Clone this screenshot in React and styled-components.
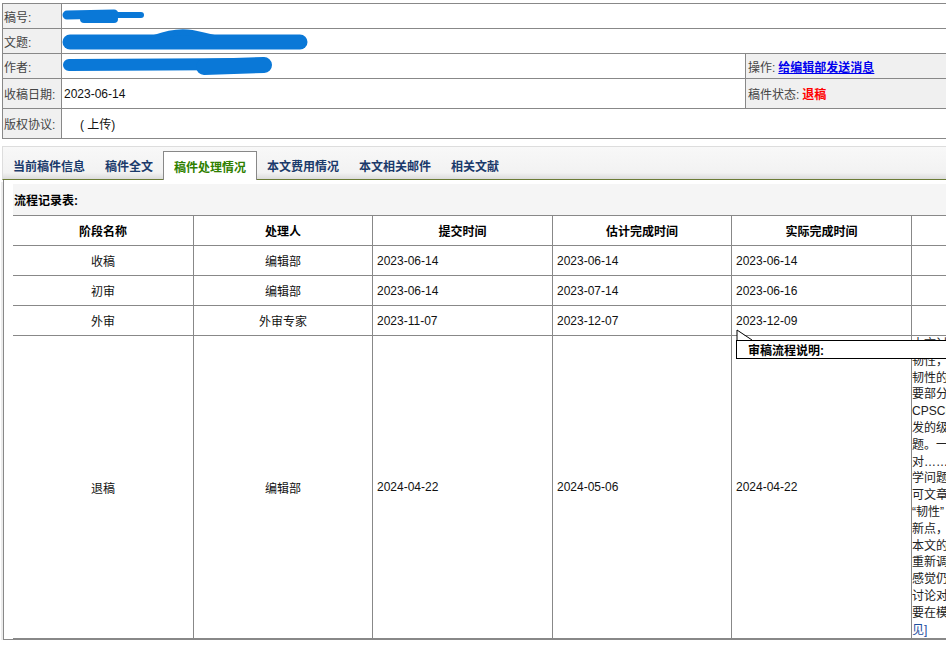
import React from 'react';
import styled, { createGlobalStyle } from 'styled-components';

const GlobalStyle = createGlobalStyle`
  html, body {
    margin: 0;
    padding: 0;
    overflow: hidden;
    background: #fff;
  }
  body {
    font-family: "Liberation Sans", "Noto Sans CJK SC", sans-serif;
    font-size: 12px;
    color: #000;
  }
`;

const Page = styled.div`
  width: 1000px;
  padding: 3px 0 0 2px;
`;

/* 稿件信息表 */
const InfoBox = styled.div`
  border-top: 1px solid #888;
  border-left: 1px solid #888;
`;

const InfoRow = styled.div`
  display: flex;
  height: ${p => p.$h}px;
  border-bottom: 1px solid #888;
`;

const Label = styled.div`
  box-sizing: border-box;
  width: 59px;
  flex: none;
  display: flex;
  align-items: center;
  padding-left: 1px;
  background: #f0f0f0;
  color: #444;
  border-right: 1px solid #888;
  white-space: nowrap;
`;

const Value = styled.div`
  box-sizing: border-box;
  width: ${p => (p.$wide ? 'auto' : '684px')};
  flex: ${p => (p.$wide ? '1' : 'none')};
  display: flex;
  align-items: center;
  padding-left: ${p => p.$indent || 2}px;
  border-right: 1px solid #888;
  color: #111;
  white-space: nowrap;
`;

const Side = styled.div`
  flex: 1;
  display: flex;
  align-items: center;
  padding-left: 2px;
  background: #f0f0f0;
  color: #444;
  white-space: nowrap;
`;

const Link = styled.a`
  color: #0000ee;
  text-decoration: underline;
  font-weight: bold;
  margin-left: 3px;
  cursor: pointer;
`;

const Status = styled.span`
  color: #ff0000;
  font-weight: bold;
  margin-left: 3px;
`;

const Redact = styled.svg`
  display: block;
  overflow: visible;
`;

/* 标签页 */
const TabBar = styled.div`
  margin-top: 7px;
  height: 32px;
  display: flex;
  align-items: flex-end;
  border-top: 1px solid #ddd;
  border-left: 1px solid #ddd;
  border-bottom: 1px solid #6b7b35;
  background: linear-gradient(#f8f8f8, #f2f2f2 80%, #dcdcdc);
`;

const Tab = styled.div`
  box-sizing: border-box;
  padding: 0 ${p => (p.$active ? 10 : 10)}px;
  display: flex;
  align-items: center;
  font-weight: bold;
  white-space: nowrap;
  color: ${p => (p.$active ? '#2f7f00' : '#1b3a6b')};
  background: ${p => (p.$active ? '#fff' : 'transparent')};
  border: ${p => (p.$active ? '1px solid #888' : 'none')};
  border-bottom: none;
  margin-bottom: ${p => (p.$active ? '-1px' : '0')};
  height: ${p => (p.$active ? 29 : 28)}px;
`;

/* 内容面板 */
const Panel = styled.div`
  margin-left: 1px;
  padding: 4px 0 0 9px;
  border-left: 1px solid #888;
  border-bottom: 1px solid #888;
  box-shadow: -2px 2px 0 #ececec;
`;

const PanelTitle = styled.div`
  height: 31px;
  display: flex;
  align-items: center;
  padding-left: 1px;
  background: #f5f5f5;
  font-weight: bold;
`;

const TableWrap = styled.div`
  position: relative;
`;

const Grid = styled.div`
  display: grid;
  grid-template-columns: 181px 179px 180px 179px 180px 40px;
`;

const Cell = styled.div`
  box-sizing: border-box;
  display: flex;
  align-items: center;
  justify-content: ${p => (p.$center ? 'center' : 'flex-start')};
  padding-left: ${p => (p.$center ? 0 : 4)}px;
  height: ${p => (p.$head ? 31 : p.$tall ? 'auto' : 30)}px;
  border-right: 1px solid #888;
  border-bottom: 1px solid #888;
  border-top: ${p => (p.$head ? '1px solid #888' : 'none')};
  font-weight: ${p => (p.$head ? 'bold' : 'normal')};
  color: ${p => (p.$head ? '#000' : '#111')};
  white-space: nowrap;
`;

const NoteCell = styled.div`
  box-sizing: border-box;
  border-bottom: 1px solid #888;
  color: #222;
`;

const NoteLine = styled.div`
  height: 16.8px;
  line-height: 16.8px;
  white-space: nowrap;
  color: ${p => (p.$link ? '#1f4f9f' : '#222')};
`;

const Tooltip = styled.div`
  position: absolute;
  left: 723px;
  top: 125px;
  width: 320px;
  height: 19px;
  box-sizing: border-box;
  border: 1px solid #000;
  background: #fff;
  display: flex;
  align-items: center;
  padding-left: 11px;
  font-weight: bold;
  color: #000;
  white-space: nowrap;
`;

const Pointer = styled.svg`
  position: absolute;
  left: 723px;
  top: 115px;
  overflow: visible;
`;

const tabs = ['当前稿件信息', '稿件全文', '稿件处理情况', '本文费用情况', '本文相关邮件', '相关文献'];

const heads = ['阶段名称', '处理人', '提交时间', '估计完成时间', '实际完成时间', ''];

const rows = [
  ['收稿', '编辑部', '2023-06-14', '2023-06-14', '2023-06-14'],
  ['初审', '编辑部', '2023-06-14', '2023-07-14', '2023-06-16'],
  ['外审', '外审专家', '2023-11-07', '2023-12-07', '2023-12-09'],
];

const noteLines = [
  '本文讨',
  '韧性，',
  '韧性的',
  '要部分',
  'CPSCI',
  '发的级',
  '题。一',
  '对……',
  '学问题',
  '可文章',
  '“韧性”',
  '新点，',
  '本文的',
  '重新调',
  '感觉仍',
  '讨论对',
  '要在模',
  '见]',
];

const blue = '#0a78d7';

export default function App() {
  return (
    <>
      <GlobalStyle />
      <Page>
        <InfoBox>
          <InfoRow $h={24}>
            <Label>稿号:</Label>
            <Value $wide>
              <Redact width="120" height="24">
                <g stroke={blue} strokeLinecap="round" fill="none">
                  <line x1="3" y1="11" x2="50" y2="10" strokeWidth="9" />
                  <line x1="20" y1="15" x2="50" y2="15" strokeWidth="8" />
                  <line x1="50" y1="11" x2="77" y2="11" strokeWidth="6" />
                </g>
              </Redact>
            </Value>
          </InfoRow>
          <InfoRow $h={24}>
            <Label>文题:</Label>
            <Value $wide>
              <Redact width="260" height="24">
                <g stroke={blue} strokeLinecap="round" fill="none">
                  <line x1="6" y1="13" x2="236" y2="13" strokeWidth="15" />
                  <path d="M90 9 Q112 1 128 4 Q138 6 150 9" strokeWidth="6" />
                </g>
              </Redact>
            </Value>
          </InfoRow>
          <InfoRow $h={24}>
            <Label>作者:</Label>
            <Value>
              <Redact width="230" height="24">
                <g stroke={blue} strokeLinecap="round" fill="none">
                  <line x1="5" y1="11" x2="200" y2="10" strokeWidth="12" />
                  <line x1="140" y1="13" x2="200" y2="11" strokeWidth="16" />
                </g>
              </Redact>
            </Value>
            <Side>
              操作:<Link>给编辑部发送消息</Link>
            </Side>
          </InfoRow>
          <InfoRow $h={29}>
            <Label>收稿日期:</Label>
            <Value>2023-06-14</Value>
            <Side>
              稿件状态:<Status>退稿</Status>
            </Side>
          </InfoRow>
          <InfoRow $h={29}>
            <Label>版权协议:</Label>
            <Value $wide $indent={18}>( 上传)</Value>
          </InfoRow>
        </InfoBox>

        <TabBar>
          {tabs.map((t, i) => (
            <Tab key={t} $active={i === 2}>{t}</Tab>
          ))}
        </TabBar>

        <Panel>
          <PanelTitle>流程记录表:</PanelTitle>
          <TableWrap>
            <Grid>
              {heads.map((h, i) => (
                <Cell key={'h' + i} $head $center>{h}</Cell>
              ))}
              {rows.map((r, ri) => (
                <React.Fragment key={ri}>
                  {r.map((v, ci) => (
                    <Cell key={ci} $center={ci < 2}>{v}</Cell>
                  ))}
                  <Cell />
                </React.Fragment>
              ))}
              <Cell $tall $center>退稿</Cell>
              <Cell $tall $center>编辑部</Cell>
              <Cell $tall>2024-04-22</Cell>
              <Cell $tall>2024-05-06</Cell>
              <Cell $tall>2024-04-22</Cell>
              <NoteCell>
                {noteLines.map((l, i) => (
                  <NoteLine key={i} $link={i === noteLines.length - 1}>{l}</NoteLine>
                ))}
              </NoteCell>
            </Grid>
            <Pointer width="16" height="11">
              <path d="M1 0 L1 11 L16 11 Z" fill="#fff" />
              <path d="M1 11 L1 0 L16 10" stroke="#000" strokeWidth="1" fill="none" />
            </Pointer>
            <Tooltip>审稿流程说明:</Tooltip>
          </TableWrap>
        </Panel>
      </Page>
    </>
  );
}
